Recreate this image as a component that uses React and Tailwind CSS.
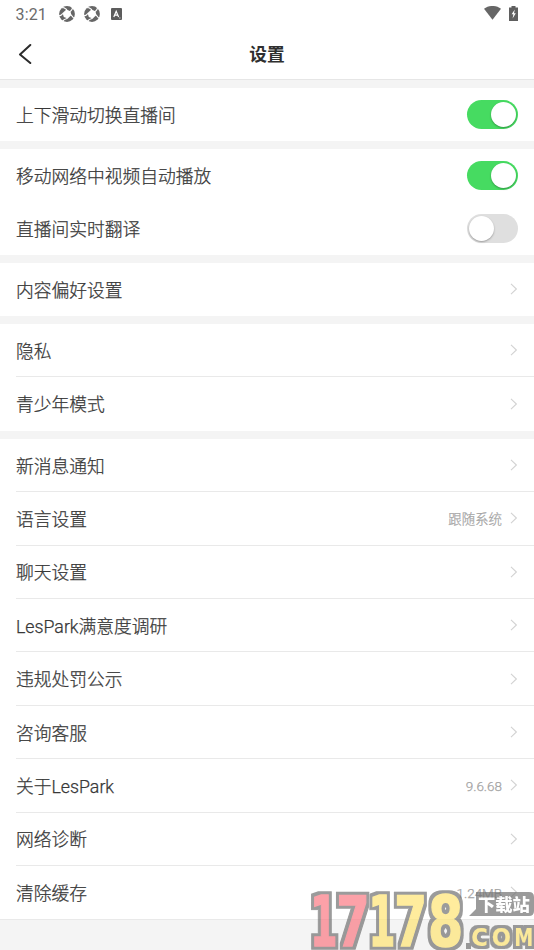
import React from 'react';

function Toggle({ on }) {
  return (
    <span
      className={
        'flex h-[29px] w-[51px] items-center rounded-full px-[2px] ' +
        (on ? 'justify-end bg-[#46db61]' : 'justify-start bg-[#dfdfdf]')
      }
    >
      <span className="h-[25px] w-[25px] rounded-full bg-white shadow-[0_1px_2px_rgba(0,0,0,0.3)]" />
    </span>
  );
}

function Chevron() {
  return (
    <svg width="8" height="12" viewBox="0 0 8 12" fill="none" stroke="#d2d2d2" strokeWidth="1.1" className="ml-[8px]">
      <path d="M1 0.8 L6.4 6 L1 11.2" />
    </svg>
  );
}

function Row({ label, value, line, toggle, on, height = 'h-[53.42px]' }) {
  return (
    <div className={'flex pl-4 ' + height}>
      <div
        className={
          'flex flex-1 items-center justify-between border-b pr-4 ' + (line ? 'border-[#e9e9e9]' : 'border-transparent')
        }
      >
        <span className="pt-[3px] text-[17.75px] font-light leading-6 text-[#383838] [-webkit-text-stroke:0.25px_#383838]">{label}</span>
        {toggle ? (
          <Toggle on={on} />
        ) : (
          <span className="flex items-center">
            {value && <span className="pt-[3px] text-[13.45px] font-light leading-5 text-[#a4a4a4] [-webkit-text-stroke:0.25px_#a4a4a4]">{value}</span>}
            <Chevron />
          </span>
        )}
      </div>
    </div>
  );
}

function SwirlIcon() {
  return (
    <svg width="16" height="16" viewBox="0 0 16 16">
      <circle cx="8" cy="8" r="7.9" fill="#666" />
      <path d="M7.4 3.4 L11.4 5.2 L12.4 9 L8.8 12.6 L4.8 11 L3.6 7 Z" fill="#fff" />
      <g stroke="#fff" strokeWidth="1.1" fill="none">
        <path d="M8 3.8 L5 1.8 L3.2 1.6" />
        <path d="M11.2 5.6 L13 3.4 L13.6 1.6" />
        <path d="M12 8.8 L14 11.4 L15.6 12" />
        <path d="M8.6 12.2 L5.2 13.6 L3.8 15" />
        <path d="M4 7.4 L1.8 9.4 L0 9.8" />
      </g>
    </svg>
  );
}

function StatusBar() {
  return (
    <div className="flex h-7 items-center justify-between pl-[15.5px] pr-[16px]">
      <div className="flex items-center">
        <span className="w-[43.5px] pt-px font-[Roboto] text-[16px] leading-5 tracking-[0.15px] text-[#6b6b6b]">3:21</span>
        <SwirlIcon />
        <span className="w-[9px]" />
        <SwirlIcon />
        <svg width="11" height="12" viewBox="0 0 11 12" className="ml-[10.5px]">
          <rect width="11" height="12" rx="1" fill="#5c5c5c" />
          <path d="M2.8 9 L5.2 3.2 L7.6 9 M3.7 7.2 H6.8" fill="none" stroke="#fff" strokeWidth="1.2" />
          <path d="M8 10 H9.6" stroke="#ddd" strokeWidth="0.8" />
        </svg>
      </div>
      <div className="flex items-center gap-2 pb-[2px]">
        <svg width="17" height="14" viewBox="0 0 17 14" fill="#666">
          <path d="M0 2.8 C5 -1 12 -1 17 2.8 L8.5 13.8 Z" />
        </svg>
        <svg width="9" height="15" viewBox="0 0 9 15">
          <path d="M2.5 0 H6.5 V1.4 H9 V15 H0 V1.4 H2.5 Z" fill="#5f5f5f" />
          <path d="M5.8 3.5 L2.6 8.2 H4.4 L3.6 12.4 L6.8 7.3 H5 Z" fill="#fff" />
        </svg>
      </div>
    </div>
  );
}

const GREY = '#727272';
const PINK = '#fb7a84';
const YELLOW = '#ffe574';

const DIGITS = [
  ['1', 314.5, 335.5, PINK],
  ['7', 339.5, 366.5, PINK],
  ['1', 373, 393.5, YELLOW],
  ['7', 397.5, 424, YELLOW],
  ['8', 430.5, 461, YELLOW],
];

const LETTERS = [
  ['C', 472.5, 486.5],
  ['O', 493, 510],
  ['M', 516, 531.5],
];

// Horizontal ink extents of the glyphs, in em.
const INK = { 1: [0.116, 0.644], 7: [0.067, 0.629], 8: [0.047, 0.649], C: [0.05, 0.67], O: [0.05, 0.8], M: [0.092, 0.903] };

function Glyph({ ch, x0, x1, y, size, color, grow }) {
  const [a, b] = INK[ch];
  const s = (x1 - x0) / ((b - a) * size);
  return (
    <text
      fontSize={size}
      fill={color}
      stroke={color}
      strokeWidth={grow}
      strokeLinejoin="miter"
      transform={`translate(${x0 - a * size * s} ${y}) scale(${s} 1)`}
    >
      {ch}
    </text>
  );
}

function Watermark() {
  return (
    <svg
      className="pointer-events-none absolute bottom-0 right-0 opacity-70"
      width="230"
      height="66"
      viewBox="304 884 230 66"
      fontFamily="'DejaVu Sans', sans-serif"
      fontWeight="700"
    >
      <defs>
        <filter id="outline" filterUnits="userSpaceOnUse" x="300" y="880" width="245" height="80" colorInterpolationFilters="sRGB">
          <feMorphology in="SourceAlpha" operator="dilate" radius="3" result="d" />
          <feFlood floodColor={GREY} />
          <feComposite in2="d" operator="in" />
          <feMerge>
            <feMergeNode />
            <feMergeNode in="SourceGraphic" />
          </feMerge>
        </filter>
      </defs>
      <path d="M476 892 H529 Q534 892 534 897 V911 Q534 916 529 916 H469 L476 909 Z" fill={GREY} />
      <g filter="url(#outline)">
        {DIGITS.map(([d, x0, x1, color], i) => (
          <Glyph key={i} ch={d} x0={x0} x1={x1} y={945.5} size={70} color={color} grow={1.5} />
        ))}
      </g>
      <rect x="466" y="943" width="5" height="6" fill={GREY} />
      <g filter="url(#outline)">
        {LETTERS.map(([c, x0, x1]) => (
          <Glyph key={c} ch={c} x0={x0} x1={x1} y={946} size={25.5} color={YELLOW} grow={0.1} />
        ))}
      </g>
      <text x="478" y="911" fontSize="17.3" fontWeight="900" fill="#fff" fontFamily="'Noto Sans CJK SC', sans-serif">
        下载站
      </text>
    </svg>
  );
}

export default function App() {
  return (
    <div className="relative h-[950px] w-[534px] overflow-hidden bg-[#f4f4f4] font-[Roboto,'Noto_Sans_CJK_SC',sans-serif]">
      <header className="h-20 border-b border-[#e6e6e6] bg-white">
        <StatusBar />
        <div className="grid h-[51px] grid-cols-3 items-center px-[18px]">
          <svg width="14" height="20" viewBox="0 0 14 20" fill="none" stroke="#2b2b2b" strokeWidth="2" strokeLinecap="round" strokeLinejoin="round">
            <path d="M12.3 1 L2 10.5 L12.3 19" />
          </svg>
          <h1 className="pt-[2px] text-center text-[17.75px] font-bold leading-6 text-[#2f2f2f]">设置</h1>
        </div>
      </header>
      <main className="flex flex-col gap-[8px] pt-2">
        <section className="bg-white">
          <Row label="上下滑动切换直播间" toggle on height="h-[53px]" />
        </section>
        <section className="bg-white">
          <Row label="移动网络中视频自动播放" toggle on height="h-[53px]" />
          <Row label="直播间实时翻译" toggle height="h-[53px]" />
        </section>
        <section className="bg-white">
          <Row label="内容偏好设置" height="h-[53px]" />
        </section>
        <section className="bg-white">
          <Row label="隐私" line />
          <Row label="青少年模式" />
        </section>
        <section className="border-b border-[#e9e9e9] bg-white">
          <Row label="新消息通知" line />
          <Row label="语言设置" value="跟随系统" line />
          <Row label="聊天设置" line />
          <Row label="LesPark满意度调研" line />
          <Row label="违规处罚公示" line />
          <Row label="咨询客服" line />
          <Row label="关于LesPark" value="9.6.68" line />
          <Row label="网络诊断" line />
          <Row label="清除缓存" value="1.24MB" />
        </section>
      </main>
      <Watermark />
    </div>
  );
}
